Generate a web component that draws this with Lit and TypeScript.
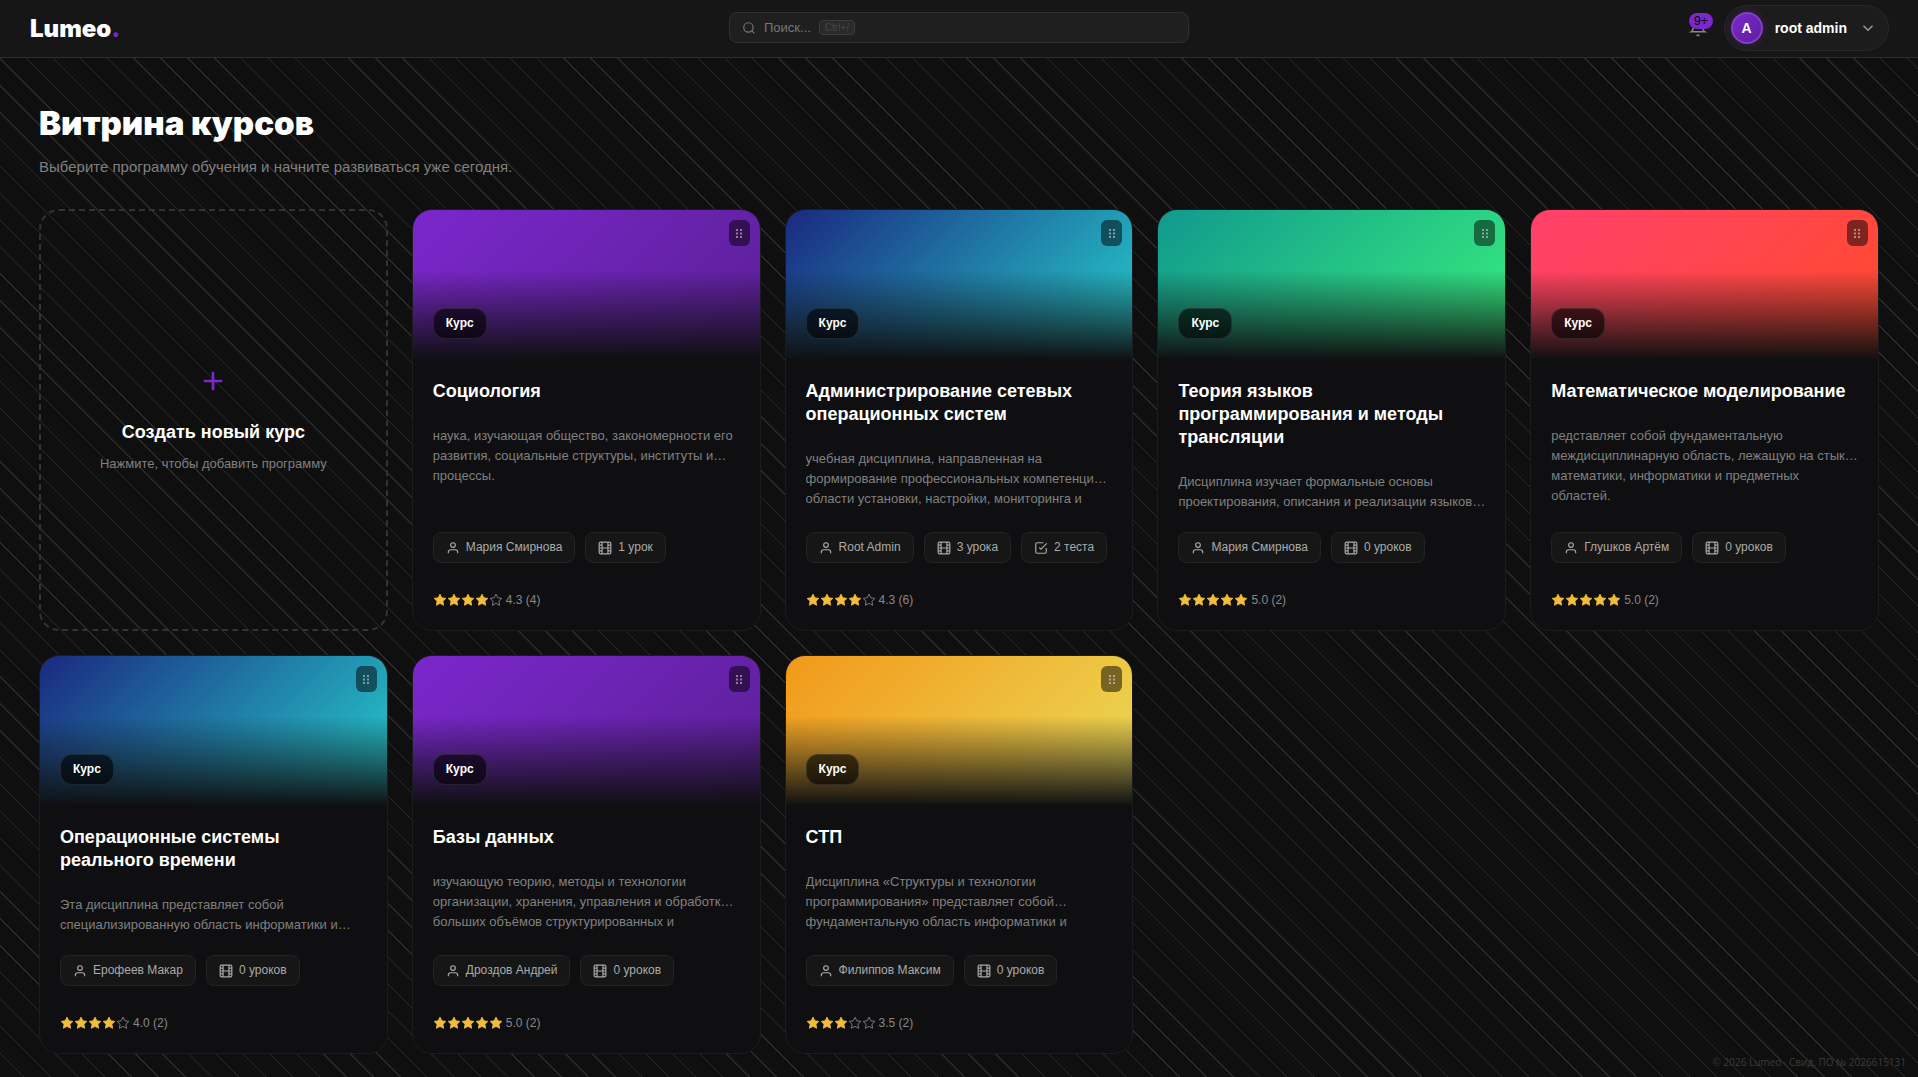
import { LitElement, html, css, svg } from "lit";
import { customElement, property } from "lit/decorators.js";

type Theme = "purple" | "aqua" | "green" | "red" | "gold";

interface Course {
  title: string;
  text: string;
  theme: Theme;
  author: string;
  lessons: string;
  tests?: string;
  stars: number;
  score: string;
}

const COURSES: Course[] = [
  {
    title: "Социология",
    text: "наука, изучающая общество, закономерности его\nразвития, социальные структуры, институты и…\nпроцессы.",
    theme: "purple", author: "Мария Смирнова", lessons: "1 урок", stars: 4, score: "4.3 (4)",
  },
  {
    title: "Администрирование сетевых операционных систем",
    text: "учебная дисциплина, направленная на\nформирование профессиональных компетенци…\nобласти установки, настройки, мониторинга и",
    theme: "aqua", author: "Root Admin", lessons: "3 урока", tests: "2 теста", stars: 4, score: "4.3 (6)",
  },
  {
    title: "Теория языков программирования и методы трансляции",
    text: "Дисциплина изучает формальные основы\nпроектирования, описания и реализации языков…",
    theme: "green", author: "Мария Смирнова", lessons: "0 уроков", stars: 5, score: "5.0 (2)",
  },
  {
    title: "Математическое моделирование",
    text: "редставляет собой фундаментальную\nмеждисциплинарную область, лежащую на стык…\nматематики, информатики и предметных\nобластей.",
    theme: "red", author: "Глушков Артём", lessons: "0 уроков", stars: 5, score: "5.0 (2)",
  },
  {
    title: "Операционные системы реального времени",
    text: "Эта дисциплина представляет собой\nспециализированную область информатики и…",
    theme: "aqua", author: "Ерофеев Макар", lessons: "0 уроков", stars: 4, score: "4.0 (2)",
  },
  {
    title: "Базы данных",
    text: "изучающую теорию, методы и технологии\nорганизации, хранения, управления и обработк…\nбольших объёмов структурированных и",
    theme: "purple", author: "Дроздов Андрей", lessons: "0 уроков", stars: 5, score: "5.0 (2)",
  },
  {
    title: "СТП",
    text: "Дисциплина «Структуры и технологии\nпрограммирования» представляет собой…\nфундаментальную область информатики и",
    theme: "gold", author: "Филиппов Максим", lessons: "0 уроков", stars: 3, score: "3.5 (2)",
  },
];

const SHAPES = {
  search: svg`<circle cx="11" cy="11" r="8"/><path d="M21 21l-4.35-4.35"/>`,
  bell: svg`<path d="M18 8A6 6 0 0 0 6 8c0 7-3 9-3 9h18s-3-2-3-9"/><path d="M13.73 21a2 2 0 0 1-3.46 0"/>`,
  chevron: svg`<path d="M6 9l6 6 6-6"/>`,
  plus: svg`<path d="M12 5v14M5 12h14"/>`,
  user: svg`<path d="M20 21v-2a4 4 0 0 0-4-4H8a4 4 0 0 0-4 4v2"/><circle cx="12" cy="7" r="4"/>`,
  film: svg`<rect x="2" y="2" width="20" height="20" rx="2.18"/><path d="M7 2v20M17 2v20M2 12h20M2 7h5M2 17h5M17 17h5M17 7h5"/>`,
  check: svg`<path d="M9 11l3 3L22 4"/><path d="M21 12v7a2 2 0 0 1-2 2H5a2 2 0 0 1-2-2V5a2 2 0 0 1 2-2h11"/>`,
  star: svg`<path stroke-width="1.5" d="M12 2l3.09 6.26L22 9.27l-5 4.87 1.18 6.88L12 17.77l-6.18 3.25L7 14.14 2 9.27l6.91-1.01z"/>`,
};

const icon = (name: keyof typeof SHAPES, cls = "") =>
  html`<svg class="icon ${cls}" viewBox="0 0 24 24" aria-hidden="true">${SHAPES[name]}</svg>`;

const shared = css`
  * { box-sizing: border-box; }
  h1, h2, p { margin: 0; }
  button { font: inherit; color: inherit; cursor: pointer; }
  .icon {
    width: 14px;
    height: 14px;
    flex: none;
    display: block;
    fill: none;
    stroke: currentColor;
    stroke-width: 2;
  }
`;

@customElement("top-bar")
export class TopBar extends LitElement {
  static styles = [shared, css`
    :host { display: block; }
    .bar {
      display: grid;
      grid-template-columns: 1fr minmax(0, 460px) 1fr;
      align-items: center;
      height: 58px;
      padding: 0 29px 2px;
      background: #161616;
      border-bottom: 1px solid #2d2d2d;
    }
    .logo {
      justify-self: start;
      padding: 2px 0 0 1px;
      color: #fff;
      font: 900 24px/32px Inter, "Liberation Sans", sans-serif;
      text-decoration: none;
    }
    .dot { color: #7b27cc; }
    .search {
      display: flex;
      align-items: center;
      height: 31px;
      padding: 0 12px;
      gap: 8px;
      background: #1f1f1f;
      border: 1px solid #303030;
      border-radius: 8px;
      color: #777;
      font-size: 13px;
      line-height: 16px;
    }
    kbd {
      padding: 0 5px;
      background: #2a2a2a;
      border: 1px solid #3c3c3c;
      border-radius: 4px;
      color: #474747;
      font: 10px/13px "Liberation Sans", Arial, sans-serif;
    }
    .tools {
      justify-self: end;
      display: flex;
      align-items: center;
      gap: 17px;
    }
    .bell {
      position: relative;
      padding: 0;
      background: none;
      border: 0;
      color: #888;
    }
    .bell-icon { width: 18px; height: 18px; }
    .count {
      position: absolute;
      top: -6px;
      right: -6px;
      padding: 0 5px;
      border-radius: 8px;
      background: #7b27cc;
      color: #000;
      font-size: 12px;
      line-height: 16px;
    }
    .account {
      display: flex;
      align-items: center;
      gap: 12px;
      height: 46px;
      padding: 0 11px 0 6px;
      background: #1c1c1c;
      border: 1px solid #282828;
      border-radius: 23px;
      color: #fff;
      font-size: 14px;
      font-weight: 700;
    }
    .avatar {
      display: grid;
      place-items: center;
      width: 32px;
      height: 32px;
      border: 2px solid #8240c4;
      border-radius: 50%;
      background: linear-gradient(135deg, #7b27cc, #5e1f9e);
      box-shadow: 0 0 10px rgba(123, 39, 204, 0.3);
    }
    .arrow { width: 18px; height: 18px; color: #999; }
  `];

  render() {
    return html`
      <header class="bar">
        <a class="logo" href="#">Lumeo<span class="dot">.</span></a>
        <button class="search" type="button">
          ${icon("search")}<span>Поиск...</span><kbd>Ctrl+/</kbd>
        </button>
        <div class="tools">
          <button class="bell" type="button" aria-label="Уведомления">
            ${icon("bell", "bell-icon")}<span class="count">9+</span>
          </button>
          <button class="account" type="button">
            <span class="avatar">A</span><span>root admin</span>${icon("chevron", "arrow")}
          </button>
        </div>
      </header>
    `;
  }
}

@customElement("course-card")
export class CourseCard extends LitElement {
  @property({ attribute: false }) course!: Course;

  static styles = [shared, css`
    :host { display: flex; min-width: 0; }
    .card {
      flex: 1;
      min-width: 0;
      display: flex;
      flex-direction: column;
      overflow: hidden;
      background: #0f0f11;
      border: 1px solid #1c1c1e;
      border-radius: 20px;
    }
    .cover {
      position: relative;
      display: flex;
      align-items: flex-end;
      height: 150px;
      padding: 20px 20px 21px;
    }
    .purple { background: linear-gradient(to top, #0f0f11, transparent 60%), linear-gradient(135deg, #7b27cc, #5b1f96); }
    .aqua { background: linear-gradient(to top, #0f0f11, transparent 60%), linear-gradient(135deg, #1a2980, #26d0ce); }
    .green { background: linear-gradient(to top, #0f0f11, transparent 60%), linear-gradient(135deg, #11998e, #38ef7d); }
    .red { background: linear-gradient(to top, #0f0f11, transparent 60%), linear-gradient(135deg, #ff416c, #ff4b2b); }
    .gold { background: linear-gradient(to top, #0f0f11, transparent 60%), linear-gradient(135deg, #f2981a, #ebdc58); }
    .kind {
      padding: 7px 12px;
      border: 1px solid rgba(255, 255, 255, 0.1);
      border-radius: 12px;
      background: rgba(0, 0, 0, 0.6);
      color: #fff;
      font-size: 12px;
      font-weight: 700;
      line-height: 15px;
    }
    .grip {
      position: absolute;
      top: 10px;
      right: 10px;
      display: grid;
      place-items: center;
      width: 21px;
      height: 26px;
      padding: 0;
      border: 0;
      border-radius: 6px;
      background: rgba(0, 0, 0, 0.5);
      color: rgba(255, 255, 255, 0.45);
    }
    .dots { width: 6px; height: 9px; fill: currentColor; display: block; }
    .body {
      flex: 1;
      display: flex;
      flex-direction: column;
      padding: 20px;
    }
    .title {
      color: #fff;
      font-size: 18px;
      line-height: 23px;
      font-weight: 700;
    }
    .text {
      flex: 1 1 0;
      min-height: 40px;
      margin: 23px -10px 20px 0;
      overflow: hidden;
      color: #808080;
      font-size: 13px;
      line-height: 20px;
      white-space: pre-line;
    }
    .tags { display: flex; flex-wrap: wrap; gap: 10px; }
    .tag {
      display: flex;
      align-items: center;
      gap: 6px;
      padding: 7px 12px;
      border: 1px solid #232323;
      border-radius: 8px;
      background: #161616;
      color: #aaa;
      font-size: 12px;
      line-height: 15px;
    }
    .rating {
      display: flex;
      align-items: center;
      gap: 3px;
      margin-top: 27px;
      color: #888;
      font-size: 12px;
      line-height: 20px;
    }
    .stars { display: flex; }
    .on { color: #f2bd3d; fill: currentColor; }
  `];

  render() {
    const c = this.course;
    return html`
      <article class="card">
        <div class="cover ${c.theme}">
          <span class="kind">Курс</span>
          <button class="grip" type="button" aria-label="Переместить">
            <svg class="dots" viewBox="0 0 6 9" aria-hidden="true">
              <path d="M0 0h2v2H0zM4 0h2v2H4zM0 3.5h2v2H0zM4 3.5h2v2H4zM0 7h2v2H0zM4 7h2v2H4z"/>
            </svg>
          </button>
        </div>
        <div class="body">
          <h2 class="title">${c.title}</h2>
          <p class="text">${c.text}</p>
          <div class="tags">
            <span class="tag">${icon("user")}${c.author}</span>
            <span class="tag">${icon("film")}${c.lessons}</span>
            ${c.tests ? html`<span class="tag">${icon("check")}${c.tests}</span>` : ""}
          </div>
          <div class="rating">
            <span class="stars">${[1, 2, 3, 4, 5].map((n) => icon("star", n <= c.stars ? "on" : ""))}</span>
            <span>${c.score}</span>
          </div>
        </div>
      </article>
    `;
  }
}

@customElement("app-root")
export class AppRoot extends LitElement {
  static styles = [shared, css`
    :host {
      display: block;
      position: relative;
      min-height: 100vh;
      background-color: #0f0f0f;
      background-image: repeating-linear-gradient(45deg, transparent 0 18px, #2a2a2a 18px 19px);
      background-size: 100% calc(100% + 2px);
      font-family: "Liberation Sans", Arial, sans-serif;
    }
    .page {
      max-width: 1840px;
      margin: 0 auto;
      padding: 44px 0 20px;
    }
    .heading {
      color: #fff;
      font: 900 33px/42px Inter, "Liberation Sans", sans-serif;
    }
    .lead {
      margin-top: 13px;
      color: #808080;
      font-size: 15px;
      line-height: 20px;
    }
    .grid {
      display: grid;
      grid-template-columns: repeat(auto-fill, minmax(320px, 1fr));
      gap: 24px;
      margin-top: 32px;
    }
    .create {
      display: flex;
      flex-direction: column;
      align-items: center;
      justify-content: center;
      padding: 0 20px 2px;
      background: none;
      border: 2px dashed #333;
      border-radius: 20px;
    }
    .plus { width: 32px; height: 32px; color: #7b27cc; }
    .create-title {
      margin-top: 24px;
      color: #fff;
      font-size: 18px;
      line-height: 23px;
      font-weight: 700;
    }
    .create-text {
      margin-top: 10px;
      color: #808080;
      font-size: 13px;
      line-height: 20px;
    }
    .legal {
      position: absolute;
      right: 12px;
      bottom: 7px;
      color: #3c3c3c;
      font: 10px/16px "Open Sans", "Noto Sans", sans-serif;
    }
  `];

  render() {
    return html`
      <top-bar></top-bar>
      <main class="page">
        <h1 class="heading">Витрина курсов</h1>
        <p class="lead">Выберите программу обучения и начните развиваться уже сегодня.</p>
        <section class="grid">
          <button class="create" type="button">
            ${icon("plus", "plus")}
            <span class="create-title">Создать новый курс</span>
            <span class="create-text">Нажмите, чтобы добавить программу</span>
          </button>
          ${COURSES.map((c) => html`<course-card .course=${c}></course-card>`)}
        </section>
      </main>
      <footer class="legal">© 2026 Lumeo · Свид. ПО № 2026615131</footer>
    `;
  }
}
